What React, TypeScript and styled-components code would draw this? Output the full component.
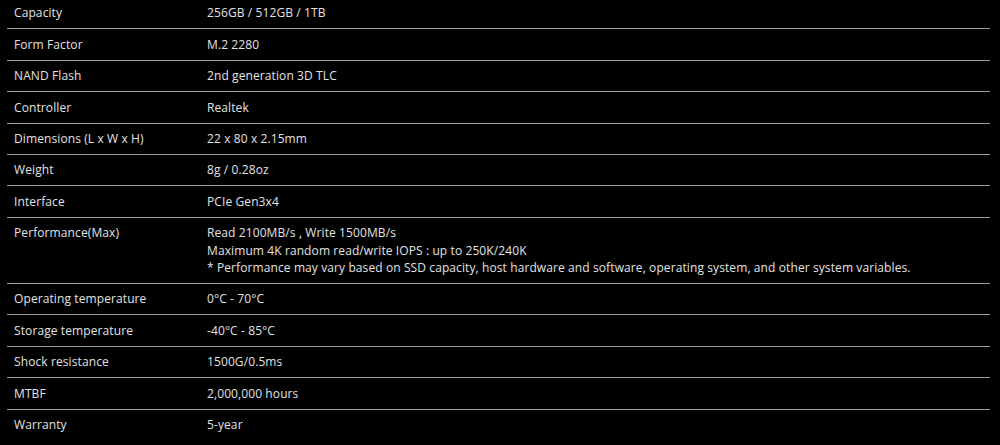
import React from "react";
import styled, { createGlobalStyle } from "styled-components";

const GlobalStyle = createGlobalStyle`
  html, body {
    margin: 0;
    padding: 0;
    background: #000;
  }
  body {
    font-family: "Open Sans", "Liberation Sans", sans-serif;
    overflow: hidden;
  }
`;

const SpecTable = styled.div`
  margin: -2px 10px 0 7px;
  color: #e2e2e2;
  font-size: 12px;
  letter-spacing: 0.1px;
`;

const Row = styled.div`
  display: grid;
  grid-template-columns: 193px 1fr;
  padding: 6.45px 0 6.45px 7px;
  line-height: 17.5px;
  border-bottom: 1px solid #9a9a9a;
  &:last-child {
    border-bottom: none;
  }
`;

const Label = styled.div``;

const Value = styled.div`
  display: flex;
  flex-direction: column;
`;

const specs: [string, string[]][] = [
  ["Capacity", ["256GB / 512GB / 1TB"]],
  ["Form Factor", ["M.2 2280"]],
  ["NAND Flash", ["2nd generation 3D TLC"]],
  ["Controller", ["Realtek"]],
  ["Dimensions (L x W x H)", ["22 x 80 x 2.15mm"]],
  ["Weight", ["8g / 0.28oz"]],
  ["Interface", ["PCIe Gen3x4"]],
  [
    "Performance(Max)",
    [
      "Read 2100MB/s , Write 1500MB/s",
      "Maximum 4K random read/write IOPS : up to 250K/240K",
      "* Performance may vary based on SSD capacity, host hardware and software, operating system, and other system variables.",
    ],
  ],
  ["Operating temperature", ["0°C - 70°C"]],
  ["Storage temperature", ["-40°C - 85°C"]],
  ["Shock resistance", ["1500G/0.5ms"]],
  ["MTBF", ["2,000,000 hours"]],
  ["Warranty", ["5-year"]],
];

const App: React.FC = () => {
  return (
    <>
      <GlobalStyle />
      <SpecTable>
        {specs.map(([label, lines]) => (
          <Row key={label}>
            <Label>{label}</Label>
            <Value>
              {lines.map((line) => (
                <span key={line}>{line}</span>
              ))}
            </Value>
          </Row>
        ))}
      </SpecTable>
    </>
  );
};

export default App;
